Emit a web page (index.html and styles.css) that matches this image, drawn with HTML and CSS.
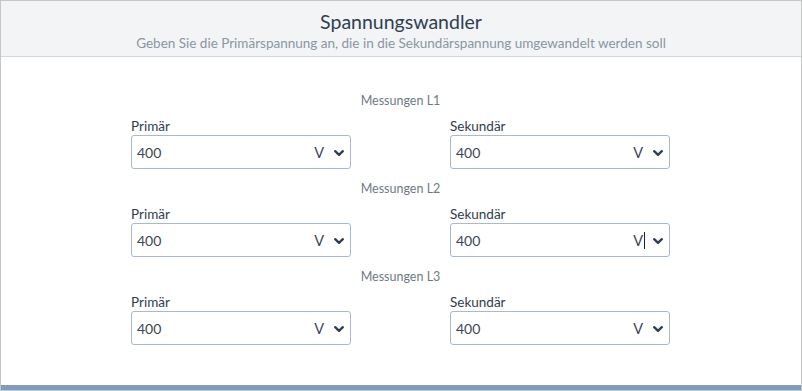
FILE: index.html
```html
<!DOCTYPE html>
<html lang="de">
<head>
<meta charset="utf-8">
<title>Spannungswandler</title>
<link rel="stylesheet" href="styles.css">
</head>
<body>
<div class="frame">
  <header class="head">
    <h1 class="title">Spannungswandler</h1>
    <p class="subtitle">Geben Sie die Primärspannung an, die in die Sekundärspannung umgewandelt werden soll</p>
  </header>
  <main class="content">
    <section class="group">
      <div class="group-label">Messungen L1</div>
      <div class="fields">
        <label class="field">
          <span class="field-label">Primär</span>
          <span class="input"><span class="value">400</span><span class="unit">V</span><svg class="chev" viewBox="0 0 10 6" width="10" height="6"><path d="M1.2 1.2 L5 4.8 L8.8 1.2" fill="none" stroke="#2d3e50" stroke-width="2.3" stroke-linecap="round" stroke-linejoin="round"/></svg></span>
        </label>
        <label class="field">
          <span class="field-label">Sekundär</span>
          <span class="input"><span class="value">400</span><span class="unit">V</span><svg class="chev" viewBox="0 0 10 6" width="10" height="6"><path d="M1.2 1.2 L5 4.8 L8.8 1.2" fill="none" stroke="#2d3e50" stroke-width="2.3" stroke-linecap="round" stroke-linejoin="round"/></svg></span>
        </label>
      </div>
    </section>
    <section class="group">
      <div class="group-label">Messungen L2</div>
      <div class="fields">
        <label class="field">
          <span class="field-label">Primär</span>
          <span class="input"><span class="value">400</span><span class="unit">V</span><svg class="chev" viewBox="0 0 10 6" width="10" height="6"><path d="M1.2 1.2 L5 4.8 L8.8 1.2" fill="none" stroke="#2d3e50" stroke-width="2.3" stroke-linecap="round" stroke-linejoin="round"/></svg></span>
        </label>
        <label class="field">
          <span class="field-label">Sekundär</span>
          <span class="input"><span class="value">400</span><span class="unit">V<span class="caret"></span></span><svg class="chev" viewBox="0 0 10 6" width="10" height="6"><path d="M1.2 1.2 L5 4.8 L8.8 1.2" fill="none" stroke="#2d3e50" stroke-width="2.3" stroke-linecap="round" stroke-linejoin="round"/></svg></span>
        </label>
      </div>
    </section>
    <section class="group">
      <div class="group-label">Messungen L3</div>
      <div class="fields">
        <label class="field">
          <span class="field-label">Primär</span>
          <span class="input"><span class="value">400</span><span class="unit">V</span><svg class="chev" viewBox="0 0 10 6" width="10" height="6"><path d="M1.2 1.2 L5 4.8 L8.8 1.2" fill="none" stroke="#2d3e50" stroke-width="2.3" stroke-linecap="round" stroke-linejoin="round"/></svg></span>
        </label>
        <label class="field">
          <span class="field-label">Sekundär</span>
          <span class="input"><span class="value">400</span><span class="unit">V</span><svg class="chev" viewBox="0 0 10 6" width="10" height="6"><path d="M1.2 1.2 L5 4.8 L8.8 1.2" fill="none" stroke="#2d3e50" stroke-width="2.3" stroke-linecap="round" stroke-linejoin="round"/></svg></span>
        </label>
      </div>
    </section>
  </main>
  <div class="bottom-bar"></div>
</div>
</body>
</html>
```
FILE: styles.css
```css
html, body {
  margin: 0;
  padding: 0;
  background: #ffffff;
}
body {
  font-family: Lato, "Open Sans", sans-serif;
  color: #2f3d4c;
}
.frame {
  box-sizing: border-box;
  width: 802px;
  height: 391px;
  border: 1px solid #c6c6c6;
  display: flex;
  flex-direction: column;
  background: #ffffff;
}
.head {
  height: 55px;
  background: #f3f4f6;
  border-bottom: 1px solid #d3d6da;
  display: flex;
  flex-direction: column;
  align-items: center;
}
.title {
  margin: 9px 0 0;
  font-size: 19.5px;
  font-weight: 400;
  line-height: 24px;
  color: #2e3f52;
}
.subtitle {
  margin: 0;
  font-size: 13.5px;
  line-height: 18px;
  color: #8a96a2;
}
.content {
  flex: 1;
  padding: 34px 1px 0 0;
  display: flex;
  flex-direction: column;
  align-items: center;
}
.group {
  width: 539px;
  display: flex;
  flex-direction: column;
  margin-bottom: 10px;
}
.group-label {
  text-align: center;
  font-size: 12.5px;
  line-height: 20px;
  color: #6e7a87;
  margin-bottom: 6px;
}
.fields {
  display: grid;
  grid-template-columns: 220px 220px;
  justify-content: space-between;
}
.field {
  display: flex;
  flex-direction: column;
}
.field-label {
  font-size: 13.5px;
  line-height: 18px;
  color: #2f3d4c;
}
.input {
  box-sizing: border-box;
  height: 34px;
  border: 1px solid #a7b8cf;
  border-radius: 3px;
  display: flex;
  align-items: center;
  padding: 0 6px 0 5px;
  font-size: 14px;
  color: #3a4656;
}
.value {
  flex: 1;
}
.unit {
  position: relative;
  font-size: 14.5px;
  margin-right: 10px;
}
.caret {
  position: absolute;
  right: -2px;
  top: 0;
  width: 1px;
  height: 17px;
  background: #222;
}
.chev {
  display: block;
  width: 10px;
  height: 6px;
  margin-top: 1px;
}
.bottom-bar {
  height: 5px;
  background: #809cc0;
}
```
